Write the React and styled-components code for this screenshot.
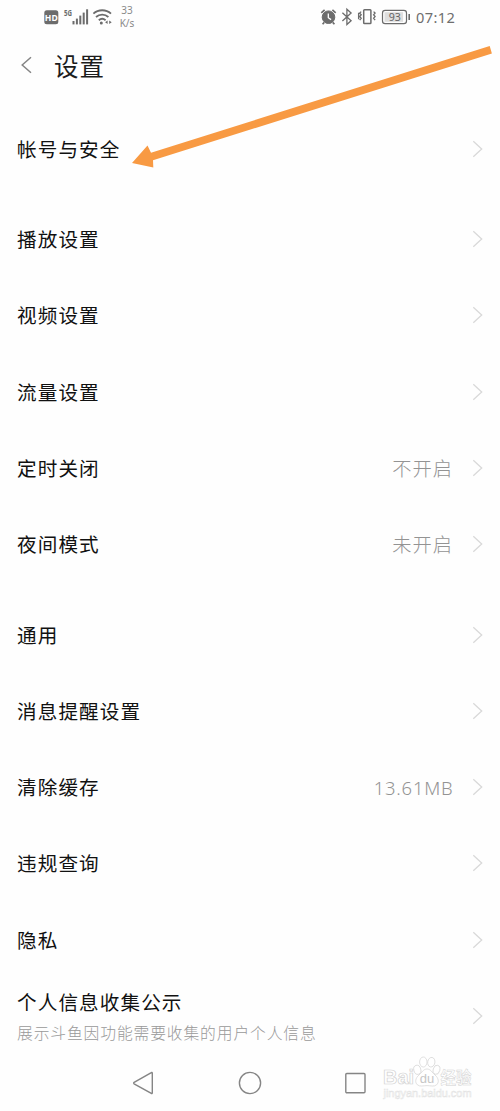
import React from 'react';
import styled, { createGlobalStyle } from 'styled-components';

const groups = [
  [{ label: '帐号与安全' }],
  [
    { label: '播放设置' },
    { label: '视频设置' },
    { label: '流量设置' },
    { label: '定时关闭', value: '不开启' },
    { label: '夜间模式', value: '未开启' },
  ],
  [
    { label: '通用' },
    { label: '消息提醒设置' },
    { label: '清除缓存', value: '13.61MB', latin: true },
    { label: '违规查询' },
    { label: '隐私' },
    { label: '个人信息收集公示', note: '展示斗鱼因功能需要收集的用户个人信息' },
  ],
];

const SignalIcons = () => (
  <svg width="72" height="20" viewBox="44 7 72 20" fill="#6c6c6c">
    <rect x="44.3" y="10.3" width="14" height="14" rx="2.5" />
    <text x="51.3" y="20.6" fontSize="8.6" fontWeight="700" textAnchor="middle" fill="#fff">HD</text>
    <text x="64" y="15.6" fontSize="8" fontWeight="700" textLength="8" lengthAdjust="spacingAndGlyphs">5G</text>
    <rect x="72.5" y="21" width="2" height="3.4" />
    <rect x="75.9" y="18.6" width="2" height="5.8" />
    <rect x="79.3" y="15.6" width="2" height="8.8" />
    <rect x="82.7" y="12.6" width="2" height="11.8" />
    <rect x="86.1" y="9.3" width="2" height="15.1" />
    <g fill="none" stroke="#6c6c6c" strokeWidth="1.8">
      <path d="M93.4 13.7a13 13 0 0 1 17.6 0" />
      <path d="M96 17a9.2 9.2 0 0 1 12.4 0" />
      <path d="M98.8 20.2a5.2 5.2 0 0 1 6.8 0" />
    </g>
    <circle cx="101.3" cy="22.9" r="1.5" />
    <path d="M107.6 20.4v3.6l-2.5-1.8zM109.2 20.4v3.6l2.5-1.8z" />
  </svg>
);

const DeviceIcons = () => (
  <svg width="92" height="20" viewBox="319 7 92 20" fill="none" stroke="#6c6c6c">
    <circle cx="327.5" cy="17.2" r="6.3" fill="#6c6c6c" />
    <path d="M320.3 12.8l3.3-3M334.7 12.8l-3.3-3M323.2 22.4l-1.6 1.8M331.8 22.4l1.6 1.8" strokeWidth="1.7" />
    <path d="M327.3 13.5v4.2l2.8 1.9" stroke="#fff" strokeWidth="1.3" />
    <path d="M341.4 12.7l8.7 8-4.2 3.9V9.2l4.2 3.8-8.7 8" strokeWidth="1.3" />
    <rect x="362.7" y="9.8" width="7.2" height="13.8" rx="0.8" strokeWidth="1.5" />
    <path d="M360.2 11.6l-1.5 1.5 1.5 1.7-1.5 1.7 1.5 1.7-1.5 2M357.6 12.8v6.5M372.6 11.6l1.5 1.5-1.5 1.7 1.5 1.7-1.5 1.7 1.5 2" strokeWidth="1.3" />
    <rect x="381.5" y="10.3" width="24" height="13.4" rx="2.6" strokeWidth="1.2" />
    <rect x="383.5" y="12.2" width="18.6" height="9.6" fill="#dedede" stroke="none" />
    <path d="M408.2 14v6" strokeWidth="1.6" />
    <text x="393.8" y="20.9" fontSize="10.6" textAnchor="middle" fill="#666" stroke="none">93</text>
  </svg>
);

const Chevron = () => (
  <svg width="12" height="18" viewBox="0 0 12 18" fill="none" stroke="#d9d9d9" strokeWidth="1.3">
    <path d="M1.3 1.2L9.7 9l-8.4 7.8" />
  </svg>
);

const Watermark = () => (
  <WatermarkSvg viewBox="380 1054 96 48" fill="#fff" stroke="#d2d2d2" strokeWidth="0.7">
    <text x="383" y="1084" fontSize="20" fontWeight="700" textLength="31" lengthAdjust="spacingAndGlyphs">Bai</text>
    <path d="M427 1069c3.5 0 5 3.3 8 6 3.8 3.2 4.2 7.5 1.6 9.8-2.5 2.2-6 .8-9.6.8s-7.1 1.4-9.6-.8c-2.6-2.3-2.2-6.6 1.6-9.8 3-2.7 4.5-6 8-6z" />
    <ellipse cx="417.3" cy="1069.8" rx="3.5" ry="4.6" transform="rotate(-15 417.3 1069.8)" />
    <ellipse cx="423.3" cy="1062" rx="3.7" ry="5" />
    <ellipse cx="431.3" cy="1062.2" rx="3.6" ry="4.8" transform="rotate(10 431.3 1062.2)" />
    <ellipse cx="436.5" cy="1069.8" rx="3.3" ry="4.6" transform="rotate(15 436.5 1069.8)" />
    <text x="427" y="1083" fontSize="13" textAnchor="middle" fill="#c6c6c6" stroke="none">du</text>
    <text x="440.5" y="1084" fontSize="16.5" fontWeight="700" strokeWidth="0.5" textLength="31" lengthAdjust="spacingAndGlyphs">经验</text>
    <text x="383.5" y="1096.5" fontSize="11" stroke="#e2e2e2" strokeWidth="0.5" textLength="88" lengthAdjust="spacingAndGlyphs">jingyan.baidu.com</text>
  </WatermarkSvg>
);

const Row = ({ item }) => (
  <RowWrap>
    <RowText>
      <Label>{item.label}</Label>
      {item.note && <Note>{item.note}</Note>}
    </RowText>
    {item.value && <Value $latin={item.latin}>{item.value}</Value>}
    <Chevron />
  </RowWrap>
);

const App = () => {
  return (
    <Screen>
      <GlobalStyle />
      <StatusBar>
        <SignalIcons />
        <Speed>
          <span>33</span>
          <span>K/s</span>
        </Speed>
        <DeviceIcons />
        <Clock>07:12</Clock>
      </StatusBar>
      <Header>
        <svg width="13" height="18" viewBox="0 0 13 18" fill="none" stroke="#858585" strokeWidth="1.5">
          <path d="M11 1.2L2.2 9l8.8 7.8" />
        </svg>
        <Title>设置</Title>
      </Header>
      <List>
        {groups.map((items, index) => (
          <Group key={index}>
            {items.map((item) => (
              <Row key={item.label} item={item} />
            ))}
          </Group>
        ))}
      </List>
      <NavBar>
        <svg width="22" height="24" viewBox="0 0 22 24">
          <path d="M20.3 2v20a.6.6 0 0 1-1 .4L2.100 12.800a.9.9 0 0 1 0-1.500L19.300 1.600a.6.6 0 0 1 1 .4z" />
        </svg>
        <svg width="24" height="24" viewBox="0 0 24 24">
          <circle cx="12" cy="12" r="10.6" />
        </svg>
        <svg width="22" height="24" viewBox="0 0 22 24">
          <rect x="0.8" y="2.5" width="19.2" height="19.2" rx="1" />
        </svg>
      </NavBar>
      <Arrow viewBox="0 0 500 180">
        <path d="M132 163l15.500-17.500 3.500 7.300L489.700 46l2.200 7.500L153 160.300l.3 7.200z" fill="#f89a43" />
      </Arrow>
      <Watermark />
    </Screen>
  );
};

const GlobalStyle = createGlobalStyle`
  body {
    margin: 0;
    background-color: #fefefe;
    font-family: "Noto Sans CJK SC", sans-serif;
  }
`;

const Screen = styled.div`
  position: relative;
  display: flex;
  flex-direction: column;
  width: 500px;
  height: 1111px;
  overflow: hidden;
  background-color: #fefefe;

  svg {
    display: block;
    flex-shrink: 0;
  }
`;

const StatusBar = styled.div`
  display: flex;
  align-items: flex-start;
  height: 33px;
  padding: 7px 44px 0;
  box-sizing: border-box;
  font-family: "Noto Sans", "Noto Sans CJK SC", sans-serif;
`;

const Speed = styled.div`
  display: flex;
  flex-direction: column;
  align-items: center;
  width: 22px;
  margin: -3px auto 0 0;
  font-size: 10px;
  line-height: 12.5px;
  color: #8a8a8a;
`;

const Clock = styled.div`
  width: 45px;
  margin-right: -1px;
  padding-left: 4px;
  box-sizing: border-box;
  font-size: 14.6px;
  line-height: 20px;
  letter-spacing: 0.4px;
  white-space: nowrap;
  color: #6e6e6e;
`;

const Header = styled.div`
  display: flex;
  align-items: center;
  gap: 21px;
  height: 64px;
  padding-left: 20px;
`;

const Title = styled.h1`
  margin: 0;
  font-size: 24.5px;
  font-weight: 400;
  letter-spacing: 1px;
  color: #1c1c1c;
`;

const List = styled.div`
  display: flex;
  flex-direction: column;
  gap: 13.9px;
  padding-top: 13.8px;
`;

const Group = styled.div`
  display: flex;
  flex-direction: column;
`;

const RowWrap = styled.div`
  display: flex;
  align-items: center;
  height: 76.3px;
  padding: 0 16px 0 17px;
  box-sizing: border-box;
`;

const RowText = styled.div`
  display: flex;
  flex-direction: column;
  gap: 2px;
  flex: 1;
  white-space: nowrap;
`;

const Label = styled.div`
  font-size: 19.6px;
  line-height: 30px;
  font-weight: 400;
  letter-spacing: 1.1px;
  color: #111;
`;

const Note = styled.div`
  font-size: 15.8px;
  line-height: 28px;
  font-weight: 300;
  letter-spacing: 0.85px;
  margin-bottom: -2px;
  color: #999;
`;

const Value = styled.div`
  margin-right: ${(props) => (props.$latin ? '18.5px' : '19px')};
  font-family: ${(props) => (props.$latin ? '"Noto Sans", sans-serif' : 'inherit')};
  font-size: ${(props) => (props.$latin ? '18.4px' : '19.3px')};
  font-weight: 300;
  letter-spacing: ${(props) => (props.$latin ? '0.8px' : '1px')};
  color: #939393;
`;

const NavBar = styled.div`
  display: flex;
  align-items: center;
  justify-content: space-between;
  height: 56px;
  margin-top: auto;
  padding: 0 133px 0 132px;

  svg {
    fill: none;
    stroke: #858585;
    stroke-width: 1.4;
  }
`;

const Arrow = styled.svg`
  position: absolute;
  top: 0;
  left: 0;
  width: 500px;
  height: 180px;
  pointer-events: none;
`;

const WatermarkSvg = styled.svg`
  position: absolute;
  left: 380px;
  top: 1054px;
  width: 96px;
  height: 48px;
  font-family: "Liberation Sans", "Noto Sans CJK SC", sans-serif;
`;

export default App;
